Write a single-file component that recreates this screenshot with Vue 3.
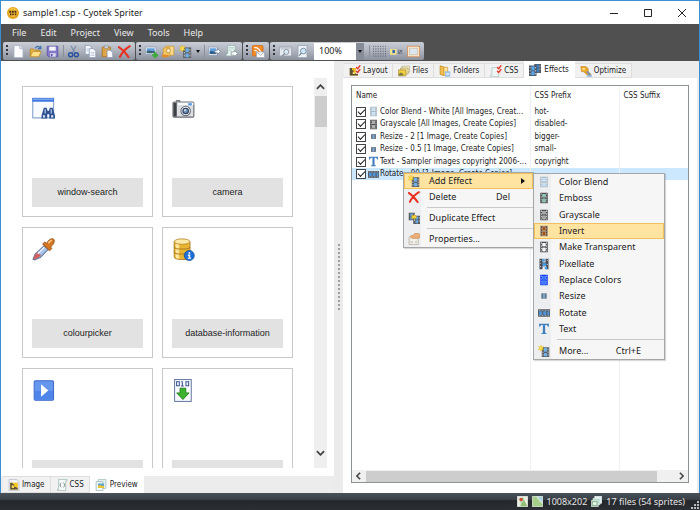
<script setup>
import { h, ref } from 'vue'

const Icon = (props) =>
  h('svg', { class: 'icon', viewBox: '0 0 16 16', 'aria-hidden': 'true' }, [
    h('use', { href: '#i-' + props.name })
  ])
Icon.props = ['name']

const menus = ['File', 'Edit', 'Project', 'View', 'Tools', 'Help']

const fileTools = [
  { icon: 'new', label: 'New' },
  { icon: 'open', label: 'Open' },
  { icon: 'save', label: 'Save' },
  { sep: true },
  { icon: 'cut', label: 'Cut' },
  { icon: 'copy', label: 'Copy' },
  { icon: 'paste', label: 'Paste' },
  { icon: 'delete', label: 'Delete' }
]
const spriteTools = [
  { icon: 'image-add', label: 'Add image' },
  { icon: 'folder-image', label: 'Add folder' },
  { icon: 'film-new', label: 'Add effect' },
  { caret: true },
  { sep: true },
  { icon: 'image-export', label: 'Export image' },
  { icon: 'page-export', label: 'Export CSS' }
]

const sprites = [
  { name: 'window-search', icon: 'window-search' },
  { name: 'camera', icon: 'camera' },
  { name: 'colourpicker', icon: 'picker' },
  { name: 'database-information', icon: 'database' },
  { name: 'control-play', icon: 'play' },
  { name: 'document-download', icon: 'binary' }
]

const viewTabs = [
  { label: 'Image', icon: 'picture' },
  { label: 'CSS', icon: 'braces' },
  { label: 'Preview', icon: 'preview' }
]
const pageTabs = [
  { label: 'Layout', icon: 'layout' },
  { label: 'Files', icon: 'pictures' },
  { label: 'Folders', icon: 'folders' },
  { label: 'CSS', icon: 'css' },
  { label: 'Effects', icon: 'films' },
  { label: 'Optimize', icon: 'optimize' }
]
const viewTab = ref('Preview')
const pageTab = ref('Effects')

const effects = ref([
  { on: true, icon: 'film', film: 'blend', name: 'Color Blend - White [All Images, Creat...', prefix: 'hot-' },
  { on: true, icon: 'film', film: 'gray', name: 'Grayscale [All Images, Create Copies]', prefix: 'disabled-' },
  { on: true, icon: 'resize', name: 'Resize - 2 [1 Image, Create Copies]', prefix: 'bigger-' },
  { on: true, icon: 'resize', name: 'Resize - 0.5 [1 Image, Create Copies]', prefix: 'small-' },
  { on: true, icon: 'text', name: 'Text - Sampler images copyright 2006-...', prefix: 'copyright' },
  { on: true, icon: 'rotate', name: 'Rotate - 90 [1 Image, Create Copies]', prefix: '', selected: true }
])

const contextItems = [
  { icon: 'film-new', label: 'Add Effect', arrow: true, hot: true },
  { icon: 'delete', label: 'Delete', key: 'Del' },
  { sep: true },
  { icon: 'film-copy', label: 'Duplicate Effect' },
  { sep: true },
  { icon: 'properties', label: 'Properties...' }
]
const effectItems = [
  { icon: 'film', film: 'blend', label: 'Color Blend' },
  { icon: 'film', film: 'emboss', label: 'Emboss' },
  { icon: 'film', film: 'gray', label: 'Grayscale' },
  { icon: 'film', film: 'invert', label: 'Invert', hot: true },
  { icon: 'film', film: 'clear', label: 'Make Transparent' },
  { icon: 'pixellate', label: 'Pixellate' },
  { icon: 'film', film: 'replace', label: 'Replace Colors' },
  { icon: 'resize', label: 'Resize' },
  { icon: 'rotate', label: 'Rotate' },
  { icon: 'text', label: 'Text' },
  { sep: true },
  { icon: 'film-new', label: 'More...', key: 'Ctrl+E' }
]
</script>

<template>
  <svg class="defs" aria-hidden="true">
    <symbol id="i-app" viewBox="0 0 16 16">
      <circle cx="8" cy="8" r="8" fill="#e3a21c" />
      <circle cx="8" cy="7" r="6" fill="#f3bd3d" />
      <path d="M3 5h2.500v2.500H3zM6.500 5H9v2.500H6.500zM10 5h2.500v2.500H10zM4 8.500h2V11H4zM7 8.500h2V11H7zM10.500 8.500h2V11h-2z" fill="#4a2a12" />
    </symbol>
    <symbol id="i-new" viewBox="0 0 16 16">
      <path d="M2.500 .5h7l4 4v11h-11z" fill="#fdfdff" stroke="#a9b4c8" />
      <path d="M9.500 .5v4h4" fill="#dde5f2" stroke="#a9b4c8" />
    </symbol>
    <symbol id="i-open" viewBox="0 0 16 16">
      <path d="M1.500 14V5h4l1.500 1.500h6V9" fill="#e9b548" stroke="#b98324" />
      <path d="M1.500 14.500l3-6.500H15l-3 6.500z" fill="#ffdf85" stroke="#c28d2a" />
      <path d="M8 4c1-3 4-3 5.500-.5M14.500 1v3.500H11" fill="none" stroke="#3d6fae" stroke-width="1.500" />
    </symbol>
    <symbol id="i-save" viewBox="0 0 16 16">
      <path d="M1.500 1.500h13v13h-11l-2-2z" fill="#8379c9" stroke="#5b50a6" />
      <path d="M4 2h8v5H4z" fill="#f4f4fb" />
      <path d="M5 10h7v4.500H5z" fill="#d9d6ee" />
      <path d="M6 11h2v3H6z" fill="#5b50a6" />
    </symbol>
    <symbol id="i-cut" viewBox="0 0 16 16">
      <path d="M5 1l4.500 9M11 1L6.500 10" stroke="#7e8fae" stroke-width="1.600" fill="none" />
      <circle cx="4.500" cy="12" r="2.500" fill="none" stroke="#27519c" stroke-width="1.800" />
      <circle cx="11.500" cy="12" r="2.500" fill="none" stroke="#27519c" stroke-width="1.800" />
    </symbol>
    <symbol id="i-copy" viewBox="0 0 16 16">
      <path d="M1.500 .5h5l3 3v8h-8z" fill="#f7f9fd" stroke="#8b9ab5" />
      <path d="M6.500 4.500h5l3 3v8h-8z" fill="#fff" stroke="#8b9ab5" />
      <path d="M8 9h5M8 11h5M8 13h5M3 5h3M3 7h3" stroke="#b4c1d8" />
    </symbol>
    <symbol id="i-paste" viewBox="0 0 16 16">
      <path d="M1.500 2.500h10v12h-10z" fill="#dda443" stroke="#a9741f" />
      <path d="M4 1h5v3H4z" fill="#d5d8df" stroke="#7f8591" stroke-width=".7" />
      <path d="M7.500 6.500h4l3 3v6h-7z" fill="#f8faff" stroke="#8b9ab5" />
    </symbol>
    <symbol id="i-delete" viewBox="0 0 16 16">
      <path d="M1 2.500C5 5 9 9 13 15M14.500 1.500C9 5 5 9 2.500 14.500" stroke="#e8301e" stroke-width="2.500" fill="none" stroke-linecap="round" />
    </symbol>
    <symbol id="i-image-add" viewBox="0 0 16 16">
      <path d="M.5 2.500h13v9H.5z" fill="#fff" stroke="#8a9ab4" />
      <path d="M2 4h10v6H2z" fill="#5f9fdd" /><path d="M2 8c3-3 5 1 10-1v3H2z" fill="#3f5f6e" />
      <path d="M11 9h3v2h2v3h-2v2h-3v-2H9v-3h2z" fill="#3cab3a" />
    </symbol>
    <symbol id="i-folder-image" viewBox="0 0 16 16">
      <path d="M4.500 1.500h10v11h-10z" fill="#ffdd8e" stroke="#cf9c3c" />
      <path d="M1.500 4l8-1.500v11L1.500 15z" fill="#f5c563" stroke="#cf9c3c" />
      <path d="M0 12h8v3H0z" fill="#e08a2c" /><circle cx="8" cy="7" r="2.500" fill="#fff1c9" stroke="#b98a3c" />
    </symbol>
    <symbol id="i-film" viewBox="0 0 16 16">
      <path d="M3 1h3v14H3zM10 1h3v14h-3zM6 1h4v1.500H6zM6 7h4v2H6zM6 13.500h4V15H6z" fill="var(--rail)" />
      <path d="M6 2.500h4V7H6zM6 9h4v4.500H6z" fill="var(--cell)" />
      <path d="M4 2h1v2H4zM4 5.500h1v2H4zM4 9h1v2H4zM4 12.500h1v1.500H4zM11 2h1v2h-1zM11 5.500h1v2h-1zM11 9h1v2h-1zM11 12.500h1v1.500h-1z" fill="var(--hole)" />
    </symbol>
    <symbol id="i-film-new" viewBox="0 0 16 16">
      <path d="M5 3h10v13H5z" fill="#5b6066" />
      <path d="M8 4h4v5H8zM8 10.500h4V15H8z" fill="#6fb0e8" />
      <path d="M6 8.500h1v2H6zM6 12h1v2H6zM13 5h1v2h-1zM13 8.500h1v2h-1zM13 12h1v2h-1z" fill="#d7dade" />
      <path d="M4 0l1 2.500L7.500 2 6 4l1.500 2.500L5 6 4 8.500 3 6 .5 6.500 2 4 .5 2 3 2.500z" fill="#fbe04c" stroke="#d9ac1c" stroke-width=".5" />
    </symbol>
    <symbol id="i-film-copy" viewBox="0 0 16 16">
      <path d="M1 1h8v10H1zM7 5h9v11H7z" fill="#555b62" />
      <path d="M3 2h4v4H3zM3 7h4v3H3zM10 6h3.500v4H10zM10 11h3.500v4H10z" fill="#6ca8dd" />
      <path d="M8 6h1v2H8zM8 10h1v2H8zM14.500 7h1v2h-1zM14.500 11h1v2h-1z" fill="#d7dade" />
      <path d="M5 4.500h3V3l4 3.500L8 10V8.500H5z" fill="#f4d33a" stroke="#b38b14" stroke-width=".6" />
    </symbol>
    <symbol id="i-films" viewBox="0 0 16 16">
      <path d="M7 0h9v12H7z" fill="#555c66" /><path d="M9.500 1h4v4h-4zM9.500 6h4v5h-4z" fill="#3f7fc0" />
      <path d="M14 2h1v2h-1zM14 6h1v2h-1z" fill="#c8ccd2" />
      <path d="M0 2h10v14H0z" fill="#4c525b" /><path d="M3 3h4.500v5.500H3zM3 9.500h4.500V15H3z" fill="#5aa5e6" />
      <path d="M1 4h1v2H1zM1 8h1v2H1zM1 12h1v2H1zM8.300 4h1v2h-1zM8.300 8h1v2h-1zM8.300 12h1v2h-1z" fill="#d7dade" />
    </symbol>
    <symbol id="i-image-export" viewBox="0 0 16 16">
      <path d="M.5 2.500h11v10H.5z" fill="#fff" stroke="#8a9ab4" /><path d="M2 4h8v7H2z" fill="#5f9fdd" />
      <path d="M2 8c3-2 4 1 8 0v3H2z" fill="#315f86" />
      <path d="M8.500 6.500h3v-2l4 3.500-4 3.500v-2h-3z" fill="#fff" stroke="#6d8298" />
    </symbol>
    <symbol id="i-page-export" viewBox="0 0 16 16">
      <path d="M3.500 .5h9v13h-11v-3h2z" fill="#f1f8f6" stroke="#8fb0ac" /><path d="M5 3h6M5 5h6M5 7h3" stroke="#a9c9c4" />
      <path d="M7.500 8.500h4v-2l4 4-4 4v-2h-4z" fill="#fff" stroke="#7c9692" />
    </symbol>
    <symbol id="i-rss" viewBox="0 0 16 16">
      <rect x=".5" y=".5" width="13" height="13" rx="1.500" fill="#f28a2a" stroke="#d06a12" />
      <path d="M3 6.500a4.500 4.500 0 0 1 4.500 4.500M3 3a8 8 0 0 1 8 8" stroke="#fff" stroke-width="1.500" fill="none" />
      <path d="M5.500 8.500h10v7h-10z" fill="#fff" stroke="#9aa3b3" /><path d="M5.500 8.500l5 4 5-4" fill="none" stroke="#9aa3b3" />
    </symbol>
    <symbol id="i-zoom-picture" viewBox="0 0 16 16">
      <path d="M.5 2.500h15v11H.5z" fill="#e6e9ee" stroke="#989fab" /><path d="M2 4h12v1.500H2z" fill="#b9c0cb" />
      <circle cx="9" cy="8.500" r="3" fill="#dcebf5" stroke="#7d8794" /><path d="M6.800 10.800L4 13.500" stroke="#7d8794" stroke-width="1.500" />
    </symbol>
    <symbol id="i-zoom-page" viewBox="0 0 16 16">
      <path d="M2.500 .5h11v15h-11z" fill="#eef1f5" stroke="#98a5b5" />
      <circle cx="9" cy="7.500" r="3.500" fill="#cfe6f6" stroke="#6e8194" /><path d="M6.500 10L4 13" stroke="#6e8194" stroke-width="1.500" />
    </symbol>
    <symbol id="i-grid" viewBox="0 0 16 16">
      <path d="M.5 1v14M3.500 1v14M6.500 1v14M9.500 1v14M12.500 1v14M15.500 1v14" stroke="#565c68" stroke-dasharray="1.500 1.500" fill="none" />
    </symbol>
    <symbol id="i-swatch" viewBox="0 0 16 16">
      <path d="M0 5h8v7H0z" fill="#f0e58a" /><path d="M3 6h3v4H3z" fill="#2f5fb3" />
      <path d="M10 6h5v5h-5z" fill="#6d7380" /><path d="M11 7h1v1h-1zM13 9h1v1h-1z" fill="#fff" />
    </symbol>
    <symbol id="i-frame" viewBox="0 0 16 16">
      <rect x=".5" y="1.500" width="15" height="13" fill="#fbe9d0" stroke="#cf8d58" />
      <path d="M3 4h10v8H3z" fill="#dbe6ee" stroke="#b9a184" stroke-width=".6" />
    </symbol>
    <symbol id="i-window-search" viewBox="0 0 16 16">
      <path d="M.5 1h14.500v13.500H.5z" fill="#f7faff" stroke="#8ea6cf" stroke-width=".8" />
      <path d="M.2 .8h15.100v2.500H.2z" fill="#3f78e0" /><path d="M.7 1.200h14v.8H.7z" fill="#84aef5" />
      <path d="M8.200 7.500h2l.6 2h1l.6-2h2l1.600 5.500v2h-4v-3h-1.400v3h-4v-2z" fill="#2f5290" />
      <path d="M7.600 12.700h1.500v1.500H7.600zM13.300 12.700h1.500v1.500h-1.500zM8.800 8.500h.7v3h-.7zM13 8.500h.7v3H13z" fill="#d5e3f8" />
    </symbol>
    <symbol id="i-camera" viewBox="0 0 16 16">
      <path d="M3 2.500h2.500v1.300H3z" fill="#e8e8e8" stroke="#555" stroke-width=".6" />
      <rect x=".7" y="3.500" width="14.500" height="10.500" rx=".8" fill="#dcdfe3" stroke="#6a6d72" stroke-width=".8" />
      <path d="M1 4h2.300v9.600H1z" fill="#3d4045" /><path d="M4 4h11v1.600H4z" fill="#f7f8f9" />
      <path d="M11.300 4.300h2.500v1.500h-2.500z" fill="#4d96e0" />
      <circle cx="9.500" cy="9.700" r="3.300" fill="#f2f4f6" stroke="#6f747b" stroke-width=".8" />
      <circle cx="9.500" cy="9.700" r="1.900" fill="#7897b9" stroke="#2c4260" stroke-width=".8" /><circle cx="9" cy="9.200" r=".6" fill="#dff0ff" />
    </symbol>
    <symbol id="i-picker" viewBox="0 0 16 16">
      <path d="M8.600 5.300l2.700 2.600-5.600 5.800-4 1.600-1-.5 1.500-3.700z" fill="#a9c3ea" stroke="#5d6f93" stroke-width=".7" />
      <path d="M3.500 10l2.800 1.900-1.700 1.800-3.100 1.200-.5-.5 1.200-3z" fill="#d0605f" /><path d="M8.500 6.400L4 11" stroke="#eaf2ff" stroke-width=".9" />
      <path d="M7.400 4.200l1.500-1.400 1.200 1C11.300 1.400 13 .2 14.800.6c1.200 1 1 3.200-1.800 5.600l.7 1.200-1.500 1.500z" fill="#d67620" stroke="#8e4b12" stroke-width=".6" />
      <path d="M11.600 3.200l1.800-1.500" stroke="#fbc383" stroke-width="1.200" stroke-linecap="round" />
    </symbol>
    <symbol id="i-database" viewBox="0 0 16 16">
      <path d="M1.500 2.500v10.800c0 2.300 11 2.300 11 0V2.500z" fill="#e7b532" stroke="#a9781b" stroke-width=".6" />
      <path d="M2.500 4v9.500c.6.600 1.500.9 2.500 1V4z" fill="#fbe79b" />
      <ellipse cx="7" cy="2.500" rx="5.500" ry="1.900" fill="#fbe9a8" stroke="#b78a2a" stroke-width=".6" />
      <path d="M1.500 6c0 2.200 11 2.200 11 0M1.500 9.500c0 2.200 11 2.200 11 0" fill="none" stroke="#b07e1c" stroke-width=".7" />
      <circle cx="12" cy="12.200" r="3.500" fill="#1e6fd6" stroke="#0f4a9c" stroke-width=".5" />
      <path d="M11.500 9.900h1.200v1h-1.200zM11 11.500h1.700v2.200h.6v.8H11v-.8h.6v-1.400H11z" fill="#fff" />
    </symbol>
    <symbol id="i-play" viewBox="0 0 16 16">
      <rect x="1.500" y="1.200" width="13.500" height="13.500" rx=".8" fill="#6796ee" stroke="#3c69c9" stroke-width=".7" />
      <path d="M2 8.200h12.600v6.100H2z" fill="#4f84ea" /><path d="M6.300 3.600l5 4.400-5 4.400z" fill="#fff" />
    </symbol>
    <symbol id="i-binary" viewBox="0 0 16 16">
      <rect x="1.800" y=".4" width="11.600" height="15.200" fill="#f8fafd" stroke="#64789f" stroke-width=".7" />
      <path d="M3.200 1.900h1.900v2.800H3.200zM7.200 1.600v3.400M6.400 1.900h.8M6.200 4.800h2M9.700 1.900h1.900v2.800H9.700z" fill="none" stroke="#38508c" stroke-width=".7" />
      <path d="M5.600 6.400h4v3.300h2.300l-4.300 4.600-4.300-4.600h2.300z" fill="#3db32d" stroke="#1d7d18" stroke-width=".6" />
    </symbol>
    <symbol id="i-picture" viewBox="0 0 16 16">
      <path d="M1.500 .5h10l3 3v12h-13z" fill="#f2f3f5" stroke="#b3b8c1" />
      <path d="M3 5h10v9H3z" fill="#f3c51f" /><path d="M3 5h3v2h2v3l5 2v2H3z" fill="#5b5138" /><path d="M5 8l3 1v3H5z" fill="#f9dd5a" />
    </symbol>
    <symbol id="i-braces" viewBox="0 0 16 16">
      <path d="M3.500 .5h11v2h-1.500v13h-11v-2h1.500z" fill="#f4f9f8" stroke="#9bb5b1" />
      <path d="M7 5C5.500 5.500 6.500 8 5 8c1.500 0 .5 2.500 2 3M10 5c1.500.5.500 3 2 3-1.500 0-.5 2.500-2 3" stroke="#58716e" fill="none" />
    </symbol>
    <symbol id="i-preview" viewBox="0 0 16 16">
      <path d="M4.500 .5h10v12h-10z" fill="#e5f1ef" stroke="#9bbab5" />
      <path d="M1.500 3.500h9v12h-9z" fill="#f4faf9" stroke="#94b2ad" /><path d="M4 6h8v6H4z" fill="#5e9fd5" />
      <path d="M4 9c3-2 5 1 8 0v3H4z" fill="#ecc531" />
    </symbol>
    <symbol id="i-layout" viewBox="0 0 16 16">
      <path d="M1 4h11v10H1z" fill="#efb91f" /><path d="M1 4h3v3h2v3l6 2v2H1z" fill="#5a5138" />
      <path d="M5 9l3 1v2H5z" fill="#fce26b" />
      <path d="M9 1h6v11H9z" fill="#f7e3e1" /><path d="M9.500 3l2 2L15 .5M9.500 8l2 2L15 5.500" stroke="#d9392c" stroke-width="1.800" fill="none" />
    </symbol>
    <symbol id="i-pictures" viewBox="0 0 16 16">
      <path d="M5.500 1.500h10v8h-10z" fill="#fff8dc" stroke="#b5ab84" /><path d="M3.500 4h10v8h-10z" fill="#f7e9a8" stroke="#a99a5a" />
      <path d="M.5 6.500h10v8H.5z" fill="#f3cd3c" stroke="#a3924a" /><path d="M1 12l3-2 3 2v2H1z" fill="#7a7a45" />
    </symbol>
    <symbol id="i-folders" viewBox="0 0 16 16">
      <path d="M1.500 1l5 1.500V14l-5-1.500z" fill="#f5bf48" stroke="#bf882a" /><path d="M6.500 3h5v11h-5z" fill="#ffe19a" stroke="#cf9c3c" />
      <path d="M8 8.500h7v7H8z" fill="#8fb8e4" /><path d="M9 11h5M9 13h5" stroke="#fff" />
    </symbol>
    <symbol id="i-css" viewBox="0 0 16 16">
      <path d="M2.500 3.500h9v12h-11v-2h2z" fill="#eef6f5" stroke="#abc5c1" />
      <path d="M9 1h6v11H9z" fill="#f7e3e1" /><path d="M9.500 3l2 2L15 .5M9.500 8l2 2L15 5.500" stroke="#d9392c" stroke-width="1.800" fill="none" />
    </symbol>
    <symbol id="i-optimize" viewBox="0 0 16 16">
      <path d="M1 2h7l3 3v4l4 4H9L5 9H2z" fill="#e9a52a" stroke="#c58a2a" stroke-width=".8" />
      <path d="M3 4h4v3H3z" fill="#fbd976" /><path d="M8 9l3-1 4 5-3 2z" fill="#8d949e" /><path d="M9 14h7v1.500H9z" fill="#7ba7d6" />
    </symbol>
    <symbol id="i-resize" viewBox="0 0 16 16">
      <path d="M4.500 4.500h7v7h-7z" fill="#5d6b79" /><path d="M6.500 5h3v6h-3z" fill="#7fa9d1" />
    </symbol>
    <symbol id="i-rotate" viewBox="0 0 16 16">
      <path d="M0 3h16v10H0z" fill="#565c64" /><path d="M1.500 5.500h4v5h-4zM7 5.500h4v5H7zM12.500 5.500h2.500v5h-2.500z" fill="#4f94d6" />
      <path d="M1 4h2v.8H1zM5 4h2v.8H5zM9 4h2v.8H9zM13 4h2v.8h-2zM1 11.300h2v.8H1zM5 11.300h2v.8H5zM9 11.300h2v.8H9zM13 11.300h2v.8h-2z" fill="#d7dade" />
    </symbol>
    <symbol id="i-text" viewBox="0 0 16 16">
      <path d="M1.500 1h13v4h-1.200c-.3-1.800-1-2.500-3.800-2.500V12c0 1.200.6 1.600 2 1.800v1H4.500v-1c1.400-.2 2-.6 2-1.800V2.500C3.700 2.500 3 3.200 2.700 5H1.500z" fill="#3f7dbb" />
    </symbol>
    <symbol id="i-pixellate" viewBox="0 0 16 16">
      <path d="M2 1h4v5h4V1h4v14h-3v-4H6v4H2z" fill="#4a4f57" /><path d="M6 1h3v4H6zM6 7h5v4H6zM9 12h3v3H9z" fill="#4aa0e4" />
      <path d="M3 3h1v1H3zM3 7h1v1H3zM3 11h1v1H3zM12 3h1v1h-1zM12 8h1v1h-1z" fill="#fff" />
    </symbol>
    <symbol id="i-properties" viewBox="0 0 16 16">
      <path d="M1.500 5.500h12v10h-12z" fill="#fbfaf6" stroke="#a9a293" /><path d="M3 11h4M3 13h4M9 11h3M9 13h3" stroke="#b5b0a4" />
      <path d="M2 6h11v2.500H2z" fill="#eadcc2" />
      <path d="M3 4l4-1 2-2.500h5.500L16 2v4l-3 1H9L6 7z" fill="#edaf78" stroke="#b87740" stroke-width=".7" />
    </symbol>
    <symbol id="i-map" viewBox="0 0 16 16">
      <path d="M.5 .5h15v15H.5z" fill="#e9efe0" stroke="#f8faf4" /><path d="M8 1l7 14H5z" fill="#92bf76" /><path d="M2 3l8 3-4 6z" fill="#b8d4ae" />
      <circle cx="6" cy="5" r="2.500" fill="#cf4b3a" />
    </symbol>
    <symbol id="i-area" viewBox="0 0 16 16">
      <path d="M.5 .5h15v15H.5z" fill="#dcebd6" stroke="#f8faf4" /><path d="M1 1h5l9 11v3H1z" fill="#a5cf8a" /><path d="M8 1h7v8z" fill="#a7d2e6" />
    </symbol>
    <symbol id="i-stack" viewBox="0 0 16 16">
      <path d="M5.500 .5h10v10h-10z" fill="#d9ecf2" stroke="#fff" /><path d="M3 3.500h10v9H3z" fill="#a9d2c6" stroke="#f3faf8" />
      <path d="M.5 6.500h10v9H.5z" fill="#8fb89f" stroke="#eef7f1" /><path d="M3 9h5v4H3z" fill="#eaf5e4" />
    </symbol>
  </svg>

  <div class="window">
    <header class="titlebar">
      <Icon name="app" class="app-icon" />
      <h1>sample1.csp - Cyotek Spriter</h1>
      <div class="caption">
        <button aria-label="Minimize"><svg viewBox="0 0 10 10"><path d="M1 5.500h8" /></svg></button>
        <button aria-label="Maximize"><svg viewBox="0 0 10 10"><path d="M1.500 1.500h7v7h-7z" /></svg></button>
        <button aria-label="Close"><svg viewBox="0 0 10 10"><path d="M1 1l8 8M9 1l-8 8" /></svg></button>
      </div>
    </header>

    <nav class="menubar">
      <button v-for="m in menus" :key="m">{{ m }}</button>
    </nav>

    <div class="toolbars">
      <div v-for="(group, g) in [fileTools, spriteTools]" :key="g" class="strip">
        <i class="grip"></i>
        <template v-for="(t, i) in group" :key="i">
          <i v-if="t.sep" class="tsep"></i>
          <button v-else-if="t.caret" class="more" aria-label="More effects"><i class="caret"></i></button>
          <button v-else class="tool" :aria-label="t.label"><Icon :name="t.icon" /></button>
        </template>
      </div>
      <div class="strip">
        <i class="grip"></i>
        <button class="tool" aria-label="Subscribe"><Icon name="rss" /></button>
      </div>
      <div class="strip">
        <i class="grip"></i>
        <button class="tool" aria-label="Actual size"><Icon name="zoom-picture" /></button>
        <button class="tool" aria-label="Fit page"><Icon name="zoom-page" /></button>
        <span class="zoom">
          <select aria-label="Zoom"><option>100%</option><option>200%</option></select>
          <span class="drop"><i class="caret"></i></span>
        </span>
        <i class="tsep"></i>
        <button class="tool" aria-label="Grid"><Icon name="grid" /></button>
        <button class="tool" aria-label="Swatch"><Icon name="swatch" /></button>
        <button class="tool" aria-label="Frame"><Icon name="frame" /></button>
      </div>
    </div>

    <main class="body">
      <section class="left">
        <div class="preview">
          <div class="cards">
            <article v-for="s in sprites" :key="s.name" class="card">
              <Icon :name="s.icon" class="sprite" />
              <p>{{ s.name }}</p>
            </article>
          </div>
          <div class="vscroll">
            <svg viewBox="0 0 10 6"><path d="M1 5l4-4 4 4" /></svg>
            <i class="vthumb"></i>
            <svg viewBox="0 0 10 6"><path d="M1 1l4 4 4-4" /></svg>
          </div>
        </div>
        <div class="tabs bottom" role="tablist">
          <button
            v-for="t in viewTabs" :key="t.label" role="tab"
            :aria-selected="t.label === viewTab" :class="{ active: t.label === viewTab }"
            @click="viewTab = t.label"
          ><Icon :name="t.icon" />{{ t.label }}</button>
        </div>
      </section>

      <div class="splitter"><i></i></div>

      <section class="right">
        <div class="tabs top" role="tablist">
          <button
            v-for="t in pageTabs" :key="t.label" role="tab"
            :aria-selected="t.label === pageTab" :class="{ active: t.label === pageTab }"
            @click="pageTab = t.label"
          ><Icon :name="t.icon" />{{ t.label }}</button>
        </div>
        <div class="page">
          <div class="list">
            <table>
              <colgroup><col class="c-name" /><col class="c-prefix" /><col /></colgroup>
              <thead>
                <tr><th>Name</th><th>CSS Prefix</th><th>CSS Suffix</th></tr>
              </thead>
              <tbody>
                <tr v-for="e in effects" :key="e.name" :class="{ selected: e.selected }">
                  <td>
                    <label>
                      <input v-model="e.on" type="checkbox" />
                      <Icon :name="e.icon" :class="e.film" />
                      <span>{{ e.name }}</span>
                    </label>
                  </td>
                  <td>{{ e.prefix }}</td>
                  <td></td>
                </tr>
                <tr class="fill"><td></td><td></td><td></td></tr>
              </tbody>
            </table>
            <div class="hscroll">
              <svg viewBox="0 0 6 10"><path d="M5 1L1 5l4 4" /></svg>
              <i class="hthumb"></i>
              <svg viewBox="0 0 6 10"><path d="M1 1l4 4-4 4" /></svg>
            </div>
          </div>
        </div>
      </section>
    </main>

    <footer class="status">
      <Icon name="map" /><Icon name="area" />
      <span>1008x202</span>
      <Icon name="stack" />
      <span>17 files (54 sprites)</span>
      <svg class="sizer" viewBox="0 0 9 9"><path d="M7 1h2v2H7zM4 4h2v2H4zM7 4h2v2H7zM1 7h2v2H1zM4 7h2v2H4zM7 7h2v2H7z" /></svg>
    </footer>

    <ul class="popup context" role="menu">
      <li v-for="(m, i) in contextItems" :key="i" :class="{ sep: m.sep }">
        <button v-if="!m.sep" role="menuitem" :class="{ hot: m.hot }">
          <Icon :name="m.icon" /><span>{{ m.label }}</span>
          <kbd v-if="m.key">{{ m.key }}</kbd>
          <i v-if="m.arrow" class="arrow"></i>
        </button>
      </li>
    </ul>
    <ul class="popup effects" role="menu">
      <li v-for="(m, i) in effectItems" :key="i" :class="{ sep: m.sep }">
        <button v-if="!m.sep" role="menuitem" :class="{ hot: m.hot }">
          <Icon :name="m.icon" :class="m.film" /><span>{{ m.label }}</span>
          <kbd v-if="m.key">{{ m.key }}</kbd>
        </button>
      </li>
    </ul>
  </div>
</template>

<style>
body {
  background: #fff;
}
</style>

<style scoped>
* {
  box-sizing: border-box;
}
button {
  border: 0;
  padding: 0;
  background: none;
  font: inherit;
  color: inherit;
}
.defs {
  position: absolute;
  width: 0;
  height: 0;
}
.icon {
  display: block;
  flex: none;
  width: 12px;
  height: 12px;
  --rail: #5b6066;
  --cell: #6fb0e8;
  --hole: #e3e6ea;
}
.blend { --rail: #a9b8c4; --cell: #c5e2f6; --hole: #eef3f6; }
.emboss { --rail: #4b4f52; --cell: #86c4b6; --hole: #b8a6a0; }
.gray { --rail: #4f4f4f; --cell: #a8a8a8; --hole: #e3e3e3; }
.invert { --rail: #8f8578; --cell: #a5501c; --hole: #3b2c22; }
.clear { --rail: #45484d; --cell: #f4f6f8; --hole: #f4f6f8; }
.replace { --rail: #1238f5; --cell: #2f7bff; --hole: #8fb0ff; }

.window {
  position: relative;
  display: flex;
  flex-direction: column;
  height: 100vh;
  border: 1px solid #3b8fd1;
  border-bottom: 0;
  font: 9px/12px "Noto Sans", "Open Sans", sans-serif;
  color: #222;
}
.titlebar {
  display: flex;
  align-items: center;
  flex: none;
  height: 23px;
  padding-left: 6px;
  gap: 4px;
}
.titlebar h1 {
  flex: 1;
  margin: 0;
  font-size: 9px;
  font-weight: 400;
}
.caption {
  display: flex;
}
.caption button {
  display: grid;
  place-items: center;
  width: 34px;
  height: 22px;
}
.caption svg {
  width: 10px;
  height: 10px;
  fill: none;
  stroke: #222;
}
.menubar {
  display: flex;
  flex: none;
  gap: 14px;
  height: 18px;
  padding-left: 11px;
  background: #505050;
  color: #e8e8e8;
}
.toolbars {
  display: flex;
  flex: none;
  height: 19px;
  padding: 0 2px 1px;
  gap: 1px;
  background: #505050;
}
.strip {
  display: flex;
  align-items: center;
  padding-right: 2px;
  border-radius: 2px;
  background: linear-gradient(#c9cdd6, #b0b5c0 45%, #8c919e);
}
.grip {
  width: 2px;
  height: 12px;
  margin: 0 2px 0 3px;
  background: repeating-linear-gradient(#33363d 0 2px, transparent 2px 4px);
}
.tool {
  display: grid;
  place-items: center;
  width: 17px;
  height: 18px;
}
.tool .icon {
  width: 13px;
  height: 13px;
}
.tsep {
  width: 1px;
  height: 12px;
  margin: 0 1px 0 2px;
  background: #8b90a0;
}
.more {
  width: 8px;
  height: 18px;
  display: grid;
  place-items: center;
}
.caret {
  width: 0;
  border: 2px solid transparent;
  border-top: 3px solid #111;
  border-bottom: 0;
}
.zoom {
  display: flex;
  height: 17px;
  width: 50px;
  margin: 0 3px;
}
.zoom select {
  flex: 1;
  min-width: 0;
  appearance: none;
  border: 0;
  border-radius: 0;
  padding: 0 0 0 5px;
  background: #fff;
  color: #222;
  font: inherit;
}
.drop {
  display: grid;
  place-items: center;
  width: 8px;
  background: #878c99;
}
.body {
  display: flex;
  flex: 1;
  min-height: 0;
}
.left {
  display: flex;
  flex: 333;
  flex-direction: column;
  min-width: 0;
}
.preview {
  display: flex;
  justify-content: space-between;
  flex: 1;
  min-height: 0;
  margin: 0 7px 8px 0;
  overflow: hidden;
  background: #fff;
}
.cards {
  display: grid;
  grid-template-columns: 131px 131px;
  grid-auto-rows: 131px;
  gap: 10px 9px;
  padding: 25px 0 0 21px;
}
.card {
  display: flex;
  flex-direction: column;
  justify-content: space-between;
  padding: 10px 9px 9px;
  border: 1px solid #c8c8c8;
}
.sprite {
  width: 23px;
  height: 23px;
}
.card p {
  margin: 0;
  background: #e2e2e2;
  font: 9px/29px "Liberation Sans", sans-serif;
  text-align: center;
}
.vscroll {
  display: flex;
  flex-direction: column;
  align-items: center;
  width: 13px;
  margin: 17px 0 0;
  padding: 6px 0 12px;
  background: #efefef;
}
.vscroll svg,
.hscroll svg {
  flex: none;
  width: 9px;
  height: 6px;
  fill: none;
  stroke: #444;
  stroke-width: 2;
}
.vthumb {
  width: 12px;
  height: 31px;
  margin: 6px 0 auto;
  background: #cdcdcd;
}
.tabs {
  display: flex;
  flex: none;
  background: #ececec;
  font: 8px/10px "DejaVu Sans Condensed", "DejaVu Sans", sans-serif;
}
.tabs button {
  display: flex;
  align-items: center;
  gap: 2px;
  padding: 0 5px;
  border: solid #dedede;
  border-width: 1px 1px 1px 0;
  background: #f1f1f1;
}
.tabs button.active {
  border-color: #fff;
  background: #fff;
}
.bottom {
  height: 17px;
  padding-left: 2px;
}
.bottom button.active {
  gap: 3px;
}
.top {
  align-items: flex-end;
  height: 17px;
  padding-left: 1px;
}
.top button {
  height: 15px;
}
.top button.active {
  height: 17px;
  gap: 3px;
}
.splitter {
  display: grid;
  place-items: center;
  width: 9px;
  background: #ebebeb;
}
.splitter i {
  width: 2px;
  height: 66px;
  background: repeating-linear-gradient(#a0a0a0 0 2px, transparent 2px 4px);
}
.right {
  display: flex;
  flex: 356;
  flex-direction: column;
  min-width: 0;
  background: #ececec;
}
.page {
  display: flex;
  flex: 1;
  min-height: 0;
  padding: 7px 8px 10px;
  margin-right: 2px;
  background: #fff;
}
.list {
  display: flex;
  flex: 1;
  flex-direction: column;
  min-width: 0;
  border: 1px solid #8e939a;
}
table {
  flex: 1;
  width: 100%;
  height: 100%;
  border-collapse: collapse;
  table-layout: fixed;
  font: 8px/10px "DejaVu Sans Condensed", "DejaVu Sans", sans-serif;
}
.c-name {
  width: 178px;
}
.c-prefix {
  width: 89px;
}
th,
td {
  height: 13px;
  padding: 0 0 0 4px;
  text-align: left;
  font-weight: 400;
  white-space: nowrap;
}
th {
  height: 19px;
}
tr:nth-child(even) td {
  height: 12px;
}
th + th,
td + td {
  border-left: 1px solid #eef1f7;
}
.selected {
  background: #cce8ff;
}
tr.fill td {
  height: auto;
}
label {
  display: flex;
  align-items: center;
  height: 12px;
}
label .icon {
  width: 11px;
  height: 11px;
  margin: 0 1px 0 2px;
}
input[type="checkbox"] {
  display: grid;
  place-items: center;
  flex: none;
  appearance: none;
  width: 10px;
  height: 10px;
  margin: 0;
  border: 1px solid #444;
  background: #fff;
}
input:checked::before {
  content: "";
  width: 6px;
  height: 3px;
  margin-bottom: 2px;
  border: solid #222;
  border-width: 0 0 1px 1px;
  transform: rotate(-45deg);
}
.hscroll {
  display: flex;
  align-items: center;
  flex: none;
  height: 12px;
  padding: 0 4px;
  background: #f0f0f0;
}
.hscroll svg {
  width: 5px;
  height: 8px;
}
.hthumb {
  flex: 1;
  height: 11px;
  margin: 0 22px 0 5px;
  background: #cdcdcd;
}
.status {
  display: flex;
  align-items: center;
  justify-content: flex-end;
  flex: none;
  gap: 4px;
  height: 17px;
  margin: 0 -1px;
  background: linear-gradient(#4a5058, #3a3f46 40%, #24272b 45%, #2b2e33);
  color: #e6e6e6;
}
.status .icon {
  width: 11px;
  height: 11px;
}
.sizer {
  align-self: flex-end;
  width: 9px;
  height: 9px;
  margin: 0 1px 1px;
  fill: #b9bcc0;
}
.popup {
  position: absolute;
  margin: 0;
  padding: 0;
  border: 1px solid #a6a6a6;
  background: linear-gradient(90deg, #eceef0 17px, #f6f6f6 17px);
  box-shadow: 1px 1px 1px rgba(0, 0, 0, 0.15);
  list-style: none;
}
.context {
  left: 402px;
  top: 171px;
  width: 131px;
}
.effects {
  left: 532px;
  top: 172px;
  width: 132px;
}
.popup li {
  height: 16px;
}
.effects li:nth-child(3n) {
  height: 17px;
}
.popup button {
  display: flex;
  align-items: center;
  width: 100%;
  height: 100%;
  padding-left: 3px;
  border: 1px solid transparent;
  text-align: left;
}
.popup button.hot {
  border-color: #efc05c;
  background: #ffe3a0;
}
.popup button span {
  flex: 1;
  padding-left: 9px;
}
.popup kbd {
  padding-right: 22px;
  font: inherit;
}
.arrow {
  margin-right: 7px;
  border: 3px solid transparent;
  border-left: 4px solid #111;
  border-right: 0;
}
.popup li.sep {
  height: 5px;
  margin-left: 23px;
  border-bottom: 2px solid transparent;
  background: linear-gradient(#c9c9c9, #c9c9c9) 0 2px / 100% 1px no-repeat;
}
</style>
